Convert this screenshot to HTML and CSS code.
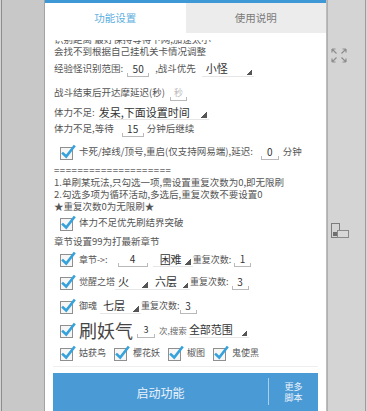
FILE: index.html
```html
<!DOCTYPE html>
<html lang="zh">
<head>
<meta charset="utf-8">
<title>功能设置</title>
<link rel="stylesheet" href="styles.css">
</head>
<body>
<div class="screen">
  <div class="side-left"></div>
  <div class="dialog">
    <div class="strip"></div>
    <div class="tabs">
      <div class="tab active">功能设置</div>
      <div class="tab">使用说明</div>
    </div>
    <div class="scroll">
      <div class="content">
        <div class="row h13">识别距离 最好保持等待下网,加速太小</div>
        <div class="row h12">会找不到根据自己挂机关卡情况调整</div>
        <div class="row h22">
          <span>经验怪识别范围:</span>
          <span class="field w22 ml4">50</span>
          <span class="ml6">,战斗优先</span>
          <span class="spin w52 ml6 pl4">小怪</span>
        </div>
        <div class="row h26">
          <span>战斗结束后开达摩延迟(秒)</span>
          <span class="field hint w17 ml5">秒</span>
        </div>
        <div class="row h13">
          <span>体力不足:</span>
          <span class="spin w110 ml4">发呆,下面设置时间</span>
        </div>
        <div class="row h20">
          <span>体力不足,等待</span>
          <span class="field w22 ml8">15</span>
          <span class="ml3">分钟后继续</span>
        </div>
        <div class="row cbrow h26">
          <svg class="cb" viewBox="0 0 17 16"><rect x="0.5" y="3.5" width="12" height="12" fill="#f6f6f6" stroke="#8f8f8f"/><path d="M3 9.5 L6.2 12.5 L14 2.5" fill="none" stroke="#35a2dc" stroke-width="2.6" stroke-linecap="square"/></svg>
          <span class="lbl">卡死/掉线/顶号,重启(仅支持网易端),延迟:</span>
          <span class="field w18 ml8">0</span>
          <span class="ml4">分钟</span>
        </div>
        <div class="row h11 eq">====================</div>
        <div class="row h13">1.单刷某玩法,只勾选一项,需设置重复次数为0,即无限刷</div>
        <div class="row h12">2.勾选多项为循环活动,多选后,重复次数不要设置0</div>
        <div class="row h11">★重复次数0为无限刷★</div>
        <div class="row cbrow h22">
          <svg class="cb" viewBox="0 0 17 16"><rect x="0.5" y="3.5" width="12" height="12" fill="#f6f6f6" stroke="#8f8f8f"/><path d="M3 9.5 L6.2 12.5 L14 2.5" fill="none" stroke="#35a2dc" stroke-width="2.6" stroke-linecap="square"/></svg>
          <span class="lbl">体力不足优先刷结界突破</span>
        </div>
        <div class="row h15">章节设置99为打最新章节</div>
        <div class="row cbrow h21">
          <svg class="cb" viewBox="0 0 17 16"><rect x="0.5" y="3.5" width="12" height="12" fill="#f6f6f6" stroke="#8f8f8f"/><path d="M3 9.5 L6.2 12.5 L14 2.5" fill="none" stroke="#35a2dc" stroke-width="2.6" stroke-linecap="square"/></svg>
          <span class="lbl sm">章节-&gt;:</span>
          <span class="field w30 ml10">4</span>
          <span class="spin w40 ml5 pl7">困难</span>
          <span class="sm">重复次数:</span>
          <span class="field w17 ml3">1</span>
        </div>
        <div class="row cbrow h24">
          <svg class="cb" viewBox="0 0 17 16"><rect x="0.5" y="3.5" width="12" height="12" fill="#f6f6f6" stroke="#8f8f8f"/><path d="M3 9.5 L6.2 12.5 L14 2.5" fill="none" stroke="#35a2dc" stroke-width="2.6" stroke-linecap="square"/></svg>
          <span class="lbl sm">觉醒之塔</span>
          <span class="spin w35 pl3">火</span>
          <span class="spin w40 pl5">六层</span>
          <span class="sm">重复次数:</span>
          <span class="field w17 ml3">3</span>
        </div>
        <div class="row cbrow h24">
          <svg class="cb" viewBox="0 0 17 16"><rect x="0.5" y="3.5" width="12" height="12" fill="#f6f6f6" stroke="#8f8f8f"/><path d="M3 9.5 L6.2 12.5 L14 2.5" fill="none" stroke="#35a2dc" stroke-width="2.6" stroke-linecap="square"/></svg>
          <span class="lbl sm">御魂</span>
          <span class="spin w41 ml3 pl3">七层</span>
          <span class="sm">重复次数:</span>
          <span class="field w17">3</span>
        </div>
        <div class="row cbrow h24">
          <svg class="cb" viewBox="0 0 17 16"><rect x="0.5" y="3.5" width="12" height="12" fill="#f6f6f6" stroke="#8f8f8f"/><path d="M3 9.5 L6.2 12.5 L14 2.5" fill="none" stroke="#35a2dc" stroke-width="2.6" stroke-linecap="square"/></svg>
          <span class="lbl huge">刷妖气</span>
          <span class="field w18 ml4 tiny">3</span>
          <span class="ml4 tiny">次,搜索</span>
          <span class="spin w60 ml2">全部范围</span>
        </div>
        <div class="row cbrow h22 quad">
          <span class="item"><svg class="cb" viewBox="0 0 17 16"><rect x="0.5" y="3.5" width="12" height="12" fill="#f6f6f6" stroke="#8f8f8f"/><path d="M3 9.5 L6.2 12.5 L14 2.5" fill="none" stroke="#35a2dc" stroke-width="2.6" stroke-linecap="square"/></svg><span class="lbl sm">姑获鸟</span></span>
          <span class="item"><svg class="cb" viewBox="0 0 17 16"><rect x="0.5" y="3.5" width="12" height="12" fill="#f6f6f6" stroke="#8f8f8f"/><path d="M3 9.5 L6.2 12.5 L14 2.5" fill="none" stroke="#35a2dc" stroke-width="2.6" stroke-linecap="square"/></svg><span class="lbl sm">樱花妖</span></span>
          <span class="item"><svg class="cb" viewBox="0 0 17 16"><rect x="0.5" y="3.5" width="12" height="12" fill="#f6f6f6" stroke="#8f8f8f"/><path d="M3 9.5 L6.2 12.5 L14 2.5" fill="none" stroke="#35a2dc" stroke-width="2.6" stroke-linecap="square"/></svg><span class="lbl sm">椒图</span></span>
          <span class="item"><svg class="cb" viewBox="0 0 17 16"><rect x="0.5" y="3.5" width="12" height="12" fill="#f6f6f6" stroke="#8f8f8f"/><path d="M3 9.5 L6.2 12.5 L14 2.5" fill="none" stroke="#35a2dc" stroke-width="2.6" stroke-linecap="square"/></svg><span class="lbl sm">鬼使黑</span></span>
        </div>
      </div>
    </div>
    <div class="footer">
      <div class="btn">
        <div class="btn-main">启动功能</div>
        <div class="btn-div"></div>
        <div class="btn-more"><span>更多</span><span>脚本</span></div>
      </div>
    </div>
  </div>
  <div class="side-right">
    <svg class="ico-expand" viewBox="0 0 16 15">
      <g fill="none" stroke="#8d8d8d" stroke-width="1.2">
        <path d="M1 1 L5.5 5.5 M1 1 H4.5 M1 1 V4.5"/>
        <path d="M15 1 L10.5 5.5 M15 1 H11.5 M15 1 V4.5"/>
        <path d="M1 14 L5.5 9.5 M1 14 H4.5 M1 14 V10.5"/>
        <path d="M15 14 L10.5 9.5 M15 14 H11.5 M15 14 V10.5"/>
      </g>
    </svg>
    <svg class="ico-screens" viewBox="0 0 18 15">
      <rect x="0.5" y="0.5" width="8" height="14" fill="#d4d4d4" stroke="#7c7c7c"/>
      <rect x="2" y="9" width="5" height="4" fill="#6f6f6f"/>
      <rect x="6.5" y="7.5" width="11" height="7" fill="#d8d8d8" stroke="#8a8a8a"/>
    </svg>
  </div>
</div>
</body>
</html>
```

FILE: styles.css
```css
* { box-sizing: border-box; }
html, body { margin: 0; padding: 0; }
body {
  width: 367px;
  height: 411px;
  overflow: hidden;
  background: #c9c9c9;
  font-family: "Noto Sans CJK SC", "Noto Sans", sans-serif;
  color: #555555;
}
.screen { display: flex; height: 411px; }
.side-left {
  width: 45px;
  background: #c8c8c8;
  box-shadow: inset 1px 0 #d2d2d2, inset 2px 0 #8e8e8e, inset -1px 0 #a3a3a3;
}
.dialog {
  width: 281px;
  background: #fff;
  display: flex;
  flex-direction: column;
}
.strip { height: 3px; background: #3d98d5; }
.tabs { display: flex; height: 30px; }
.tab {
  flex: 1;
  display: flex;
  align-items: center;
  justify-content: center;
  font-size: 10.5px;
  background: #ececec;
  color: #7a7a7a;
}
.tab.active { background: #fff; color: #5aaee0; }

.scroll { margin-top: 7px; height: 326px; overflow: hidden; }
.content { margin-top: -7px; }

.row {
  display: flex;
  align-items: center;
  padding-left: 9px;
  font-size: 9.5px;
  line-height: 1;
  white-space: nowrap;
}
.cbrow { padding-left: 15px; }
.h11 { height: 11px; }
.h12 { height: 12px; }
.h13 { height: 13px; }
.h15 { height: 15px; }
.h20 { height: 20px; }
.h21 { height: 21px; }
.h22 { height: 22px; }
.h24 { height: 24px; }
.h26 { height: 26px; }

.ml2 { margin-left: 2px; }
.ml3 { margin-left: 3px; }
.ml4 { margin-left: 4px; }
.ml5 { margin-left: 5px; }
.ml6 { margin-left: 6px; }
.ml8 { margin-left: 8px; }
.ml10 { margin-left: 10px; }
.pl3 { padding-left: 3px; }
.pl4 { padding-left: 4px; }
.pl5 { padding-left: 5px; }
.pl7 { padding-left: 7px; }
.w17 { width: 17px; }
.w18 { width: 18px; }
.w22 { width: 22px; }
.w30 { width: 30px; }
.w35 { width: 35px; }
.w40 { width: 40px; }
.w41 { width: 41px; }
.w52 { width: 52px; }
.w60 { width: 60px; }
.w110 { width: 110px; }

.eq { letter-spacing: 0.6px; color: #666; }

.cb { width: 17px; height: 16px; flex: none; }
.lbl { margin-left: 2px; }
.sm { font-size: 9px; }
.tiny { font-size: 8.5px; color: #666; }
.huge { font-size: 18px; color: #444; }

.field {
  display: flex;
  align-items: center;
  justify-content: center;
  height: 16px;
  font-size: 10px;
  color: #333;
  background:
    linear-gradient(#b9b9b9, #b9b9b9) left bottom / 100% 1px no-repeat,
    linear-gradient(#b9b9b9, #b9b9b9) left bottom / 1px 4px no-repeat,
    linear-gradient(#b9b9b9, #b9b9b9) right bottom / 1px 4px no-repeat;
}
.field.tiny { font-size: 9px; }
.hint { color: #bdbdbd; font-size: 9px; }

.spin {
  display: flex;
  align-items: center;
  height: 16px;
  font-size: 11px;
  color: #333;
  background:
    linear-gradient(to bottom right, transparent 50%, #555 50%) right 2px bottom 2px / 6px 6px no-repeat,
    linear-gradient(#e6e6e6, #e6e6e6) left bottom / 100% 1px no-repeat;
}

.quad { gap: 8px; }
.item { display: flex; align-items: center; }

.footer {
  margin: 2px 8px 0;
  border-top: 1px solid #eeeeee;
  padding-top: 6px;
}
.btn { display: flex; height: 38px; background: #4a9ad5; color: #eaf3fb; }
.btn-main {
  flex: 1;
  display: flex;
  align-items: center;
  justify-content: center;
  font-size: 12px;
}
.btn-div { width: 1px; background: #a9cfec; margin: 5px 0 6px; }
.btn-more {
  width: 49px;
  display: flex;
  flex-direction: column;
  align-items: center;
  justify-content: center;
  gap: 1px;
  font-size: 9px;
  line-height: 10px;
  text-align: center;
}

.side-right {
  width: 41px;
  background: #d4d4d4;
  box-shadow: inset 1px 0 #bdbdbd, inset 2px 0 #b0b0b0, inset -1px 0 #d8d8d8, inset -2px 0 #9c9c9c;
  display: flex;
  flex-direction: column;
  padding: 48px 0 0 5px;
}
.ico-expand { width: 16px; height: 15px; }
.ico-screens { width: 18px; height: 15px; margin-top: 160px; }
```
